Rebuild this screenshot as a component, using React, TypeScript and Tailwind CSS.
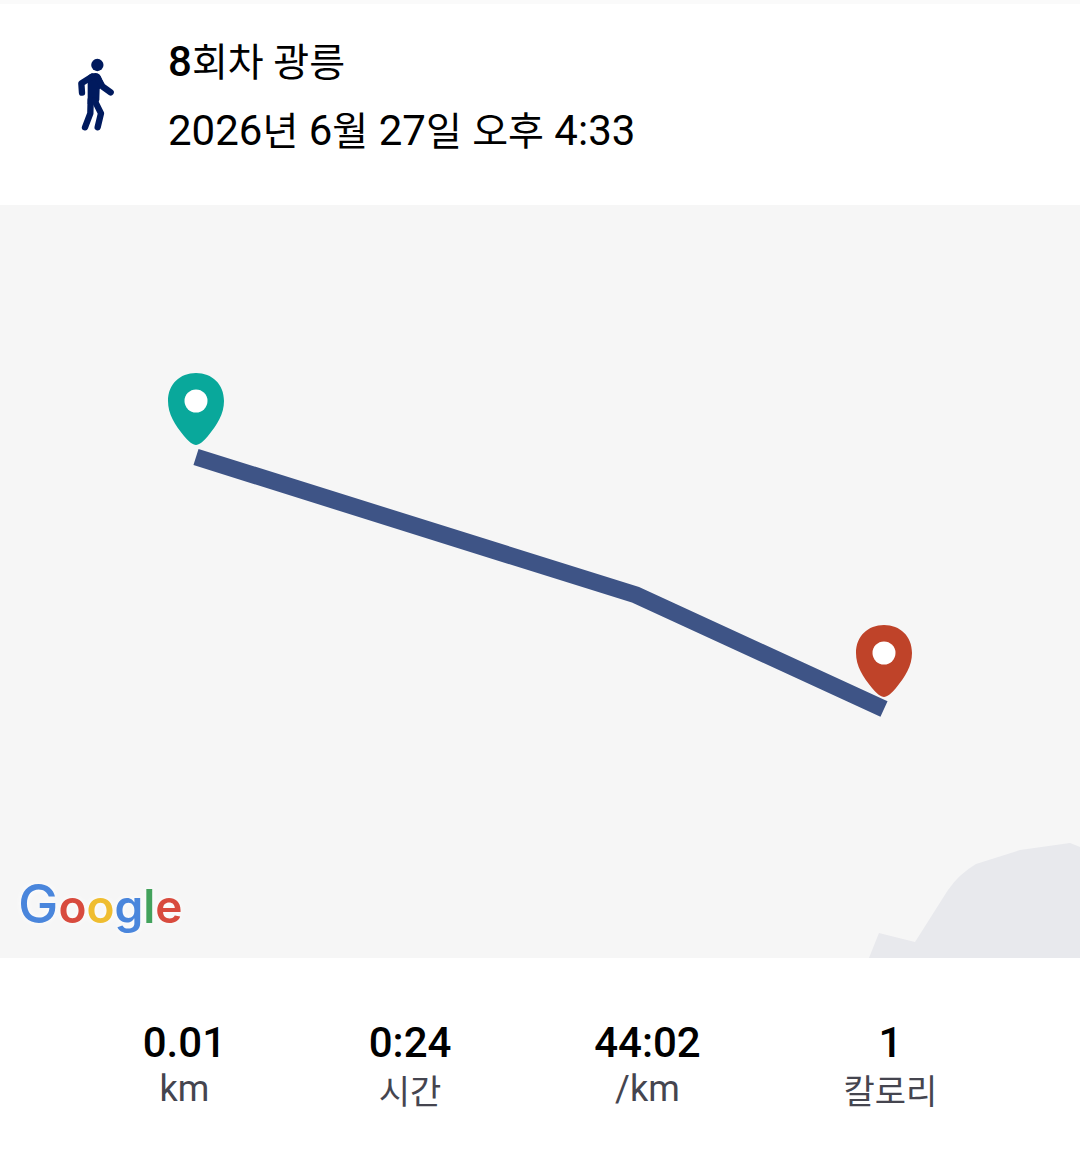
import { clsx } from "clsx";

interface Stat {
  value: string;
  label: string;
  korean?: boolean;
}

const stats: Stat[] = [
  { value: "0.01", label: "km" },
  { value: "0:24", label: "시간", korean: true },
  { value: "44:02", label: "/km" },
  { value: "1", label: "칼로리", korean: true },
];

const WalkIcon = () => (
  <svg
    className="w-10 h-[76px] shrink-0"
    viewBox="48 51 120 228"
    fill="none"
    stroke="#001a5e"
    strokeWidth="19"
    strokeLinecap="round"
    strokeLinejoin="round"
    aria-hidden="true"
  >
    <circle cx="112" cy="75" r="18.5" fill="#001a5e" stroke="none" />
    <path
      d="M86 106C92 101 98 99 106 99C115 99 121 105 124 113L130 130L119 148L118 180L112 192H83V120Z"
      fill="#001a5e"
      stroke="none"
    />
    <path d="M66 158L64 130L96 110" />
    <path d="M113 113L127 139L152 157" />
    <path d="M92 180L91 220L75 262" />
    <path d="M104 182L123 220L113 262" />
  </svg>
);

interface PinProps {
  x: number;
  y: number;
  color: string;
}

// x and y are where the tip of the pin stands
const Pin = ({ x, y, color }: PinProps) => (
  <g transform={`translate(${x} ${y})`}>
    <path
      d="M0 0C-3 0 -8 -4 -12 -9C-21 -20 -28 -31 -28 -44C-28 -61 -16 -72 0 -72C16 -72 28 -61 28 -44C28 -31 21 -20 12 -9C8 -4 3 0 0 0Z"
      fill={color}
    />
    <circle cx="0" cy="-44" r="11.5" fill="#ffffff" />
  </g>
);

const RouteMap = () => (
  <section className="relative bg-[#f6f6f6]" aria-label="지도">
    <svg className="block w-full" viewBox="0 0 1080 753" aria-hidden="true">
      <path
        d="M869 753L879 728L915 737L948 685Q959 669 976 659L1020 645L1070 638L1080 642V753Z"
        fill="#e8e9ed"
      />
      <path
        d="M196 252L636 390L884 504"
        fill="none"
        stroke="#3e5486"
        strokeWidth="17"
      />
      <Pin x={196} y={240} color="#09a89b" />
      <Pin x={884} y={492} color="#bf4329" />
    </svg>
    <div className="absolute bottom-4 left-[18px] font-['Inter',sans-serif] text-[46px] leading-[72px] font-semibold drop-shadow-[0_0_3px_#ffffff]">
      <span className="text-[54px] font-medium text-[#4a86dc]">G</span>
      <span className="text-[#d84b3e]">o</span>
      <span className="text-[#efbd30]">o</span>
      <span className="text-[#4a86dc]">g</span>
      <span className="text-[#43a25c]">l</span>
      <span className="text-[#d84b3e]">e</span>
    </div>
  </section>
);

const Ko = ({ children }: { children: string }) => (
  <span className="text-[39px] font-normal">{children}</span>
);

export default function App() {
  return (
    <main className="bg-white font-['Roboto','Noto_Sans_CJK_KR',sans-serif] text-black">
      <header className="flex items-start border-t-4 border-[#fafafa] pt-6 pb-[39px] pl-[76px]">
        <div className="pt-[29px]">
          <WalkIcon />
        </div>
        <div className="ml-[52px] text-[42px] leading-[67px]">
          <h1 className="font-medium">
            8<Ko>회차 광릉</Ko>
          </h1>
          <p>
            2026<Ko>년</Ko> 6<Ko>월</Ko> 27<Ko>일</Ko> <Ko>오후</Ko> 4:33
          </p>
        </div>
      </header>
      <RouteMap />
      <dl className="flex justify-evenly pt-[61px] pb-10 text-center">
        {stats.map((stat) => (
          <div
            key={stat.label}
            className="flex flex-col-reverse justify-end"
          >
            <dt
              className={clsx(
                "text-[#45454f]",
                stat.korean
                  ? "text-[34px] leading-[50px]"
                  : "text-[36px] leading-[44px]"
              )}
            >
              {stat.label}
            </dt>
            <dd className="text-[42px] leading-[48px] font-medium">
              {stat.value}
            </dd>
          </div>
        ))}
      </dl>
    </main>
  );
}
